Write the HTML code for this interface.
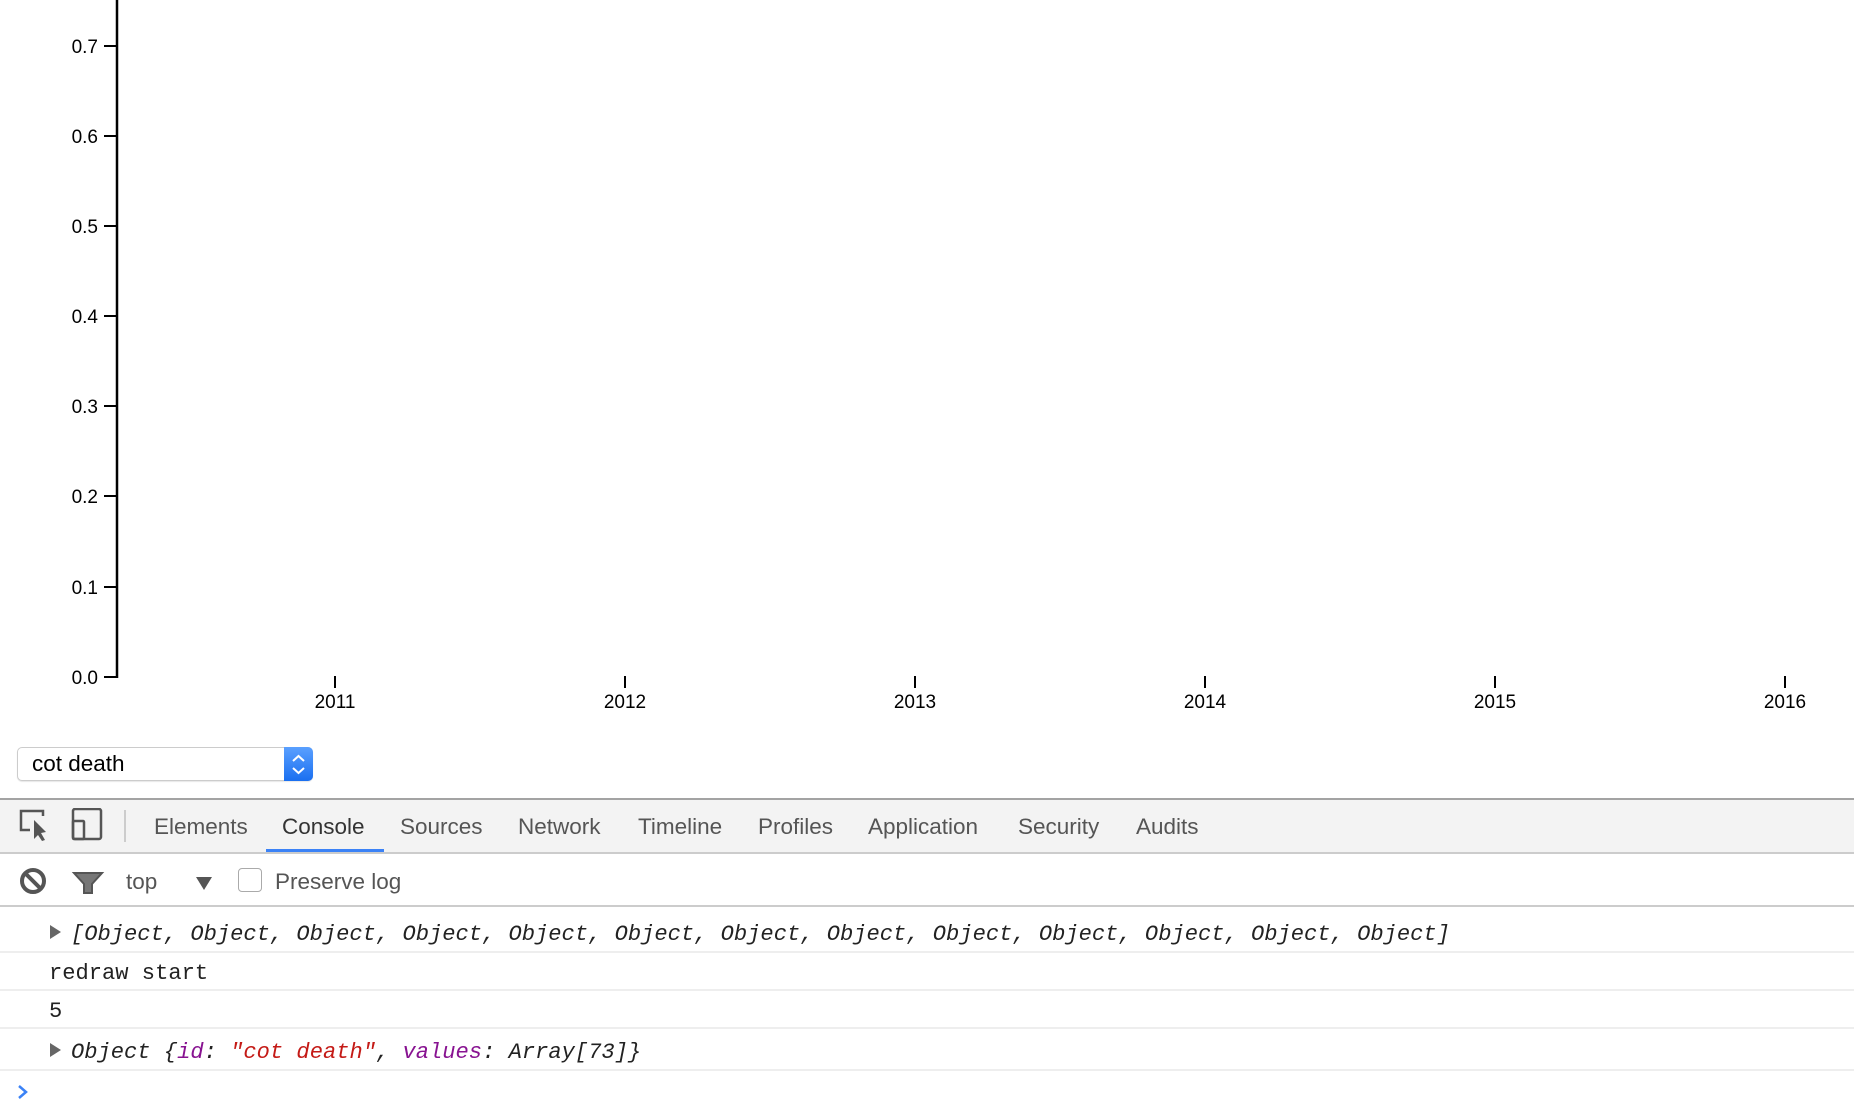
<!DOCTYPE html>
<html><head><meta charset="utf-8"><style>
body{margin:0;width:1854px;height:1110px;overflow:hidden;background:#fff;font-family:"Liberation Sans",Arial,sans-serif;position:relative}
.a{position:absolute}
.tab{position:absolute;top:814px;font-size:22.5px;color:#555}
.mono{font-family:"Liberation Mono",monospace;font-size:22.1px;color:#222;position:absolute;white-space:pre}
.sep{position:absolute;left:0;width:1854px;height:2px;background:#eee}
.tri{position:absolute;width:0;height:0;border-top:7px solid transparent;border-bottom:7px solid transparent;border-left:11px solid #666}
</style></head><body>
<svg class="a" style="left:0;top:0" width="1854" height="720" font-family="Liberation Sans, Arial, sans-serif" font-size="19">
<line x1="117" y1="0" x2="117" y2="678" stroke="#000" stroke-width="2.5"/>
<g stroke="#000" stroke-width="2">
<line x1="104" y1="46" x2="117" y2="46"/><line x1="104" y1="136" x2="117" y2="136"/><line x1="104" y1="226" x2="117" y2="226"/><line x1="104" y1="316" x2="117" y2="316"/><line x1="104" y1="406" x2="117" y2="406"/><line x1="104" y1="496" x2="117" y2="496"/><line x1="104" y1="587" x2="117" y2="587"/><line x1="104" y1="677" x2="118" y2="677"/>
<line x1="335" y1="676" x2="335" y2="688"/><line x1="625" y1="676" x2="625" y2="688"/><line x1="915" y1="676" x2="915" y2="688"/><line x1="1205" y1="676" x2="1205" y2="688"/><line x1="1495" y1="676" x2="1495" y2="688"/><line x1="1785" y1="676" x2="1785" y2="688"/>
</g>
<g text-anchor="end">
<text x="98" y="53">0.7</text><text x="98" y="143">0.6</text><text x="98" y="233">0.5</text><text x="98" y="323">0.4</text><text x="98" y="413">0.3</text><text x="98" y="503">0.2</text><text x="98" y="594">0.1</text><text x="98" y="684">0.0</text>
</g>
<g text-anchor="middle">
<text x="335" y="708">2011</text><text x="625" y="708">2012</text><text x="915" y="708">2013</text><text x="1205" y="708">2014</text><text x="1495" y="708">2015</text><text x="1785" y="708">2016</text>
</g>
</svg>
<div class="a" style="left:17px;top:747px;width:294px;height:32px;border:1px solid #ccc;border-radius:5px;background:#fff;box-shadow:0 1px 1px rgba(0,0,0,.1)"></div>
<div class="a" style="left:32px;top:751px;font-size:22.5px;color:#000">cot death</div>
<div class="a" style="left:284px;top:747px;width:29px;height:34px;background:linear-gradient(#5aa0ff,#1a6ff0);border-radius:0 5px 5px 0"></div>
<svg class="a" style="left:284px;top:747px" width="29" height="34"><path d="M9 14 L14.5 9 L20 14 M9 21 L14.5 26 L20 21" stroke="#fff" stroke-width="2" fill="none"/></svg>

<div class="a" style="left:0;top:798px;width:1854px;height:54px;background:#f3f3f3;border-top:2px solid #a3a3a3"></div>
<div class="a" style="left:0;top:852px;width:1854px;height:2px;background:#ccc"></div>
<svg class="a" style="left:18px;top:808px" width="90" height="40" fill="none" stroke="#555" stroke-width="2.5">
<path d="M12 22 H3 V3 H25 V8"/><path d="M16 12 L28 24 L23 25 L27 32 L24 33 L20 27 L16 31 Z" fill="#555" stroke="none"/>
<rect x="55" y="1" width="28" height="30" rx="2"/><rect x="55" y="13" width="11" height="18" rx="1"/>
</svg>
<div class="a" style="left:124px;top:810px;width:2px;height:32px;background:#ccc"></div>
<div class="tab" style="left:154px">Elements</div>
<div class="tab" style="left:282px;color:#333">Console</div>
<div class="a" style="left:266px;top:849px;width:118px;height:3px;background:#3b82f6"></div>
<div class="tab" style="left:400px">Sources</div>
<div class="tab" style="left:518px">Network</div>
<div class="tab" style="left:638px">Timeline</div>
<div class="tab" style="left:758px">Profiles</div>
<div class="tab" style="left:868px">Application</div>
<div class="tab" style="left:1018px">Security</div>
<div class="tab" style="left:1136px">Audits</div>

<svg class="a" style="left:18px;top:866px" width="200" height="30">
<circle cx="15" cy="15" r="11" fill="none" stroke="#555" stroke-width="4"/><line x1="7" y1="7" x2="23" y2="23" stroke="#555" stroke-width="4"/>
<path d="M56 7 H84 L74 18 V27 H66 V18 Z" fill="#777" stroke="#555" stroke-width="2"/>
<path d="M178 11 H194 L186 24 Z" fill="#555"/>
</svg>
<div class="a" style="left:126px;top:869px;font-size:22.5px;color:#555">top</div>
<div class="a" style="left:238px;top:868px;width:22px;height:22px;border:1px solid #aaa;border-radius:4px;background:#fff"></div>
<div class="a" style="left:275px;top:869px;font-size:22.5px;color:#555">Preserve log</div>
<div class="a" style="left:0;top:905px;width:1854px;height:2px;background:#ccc"></div>

<div class="tri" style="left:50px;top:925px"></div>
<div class="mono" style="left:71px;top:922px;font-style:italic">[Object, Object, Object, Object, Object, Object, Object, Object, Object, Object, Object, Object, Object]</div>
<div class="sep" style="top:951px"></div>
<div class="mono" style="left:49px;top:961px">redraw start</div>
<div class="sep" style="top:989px"></div>
<div class="mono" style="left:49px;top:999px">5</div>
<div class="sep" style="top:1027px"></div>
<div class="tri" style="left:50px;top:1043px"></div>
<div class="mono" style="left:71px;top:1040px;font-style:italic">Object {<span style="color:#881391">id</span>: <span style="color:#c41a16">"cot death"</span>, <span style="color:#881391">values</span>: Array[73]}</div>
<div class="sep" style="top:1069px"></div>
<svg class="a" style="left:16px;top:1084px" width="14" height="16"><path d="M3 2 L10 8 L3 14" stroke="#3b82f6" stroke-width="2.5" fill="none"/></svg>
</body></html>
